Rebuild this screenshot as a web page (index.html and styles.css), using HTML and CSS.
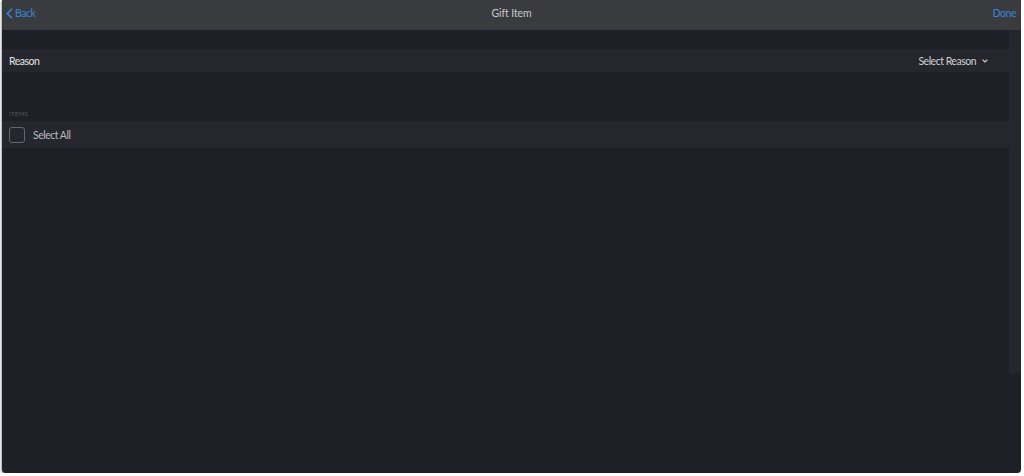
FILE: index.html
```html
<!DOCTYPE html>
<html lang="en">
<head>
  <meta charset="UTF-8">
  <title>Gift Item</title>
  <link rel="stylesheet" href="styles.css">
</head>
<body>
  <div class="screen">
    <header class="nav">
      <a class="nav-back" href="#">
        <svg width="7" height="11" viewBox="0 0 7 11"><path d="M6 0.8 L1.3 5.5 L6 10.2" fill="none" stroke="currentColor" stroke-width="1.6"/></svg>
        <span>Back</span>
      </a>
      <div class="nav-title">Gift Item</div>
      <a class="nav-done" href="#">Done</a>
    </header>

    <div class="content">
      <div class="spacer-top"></div>
      <div class="row">
        <span class="row-label">Reason</span>
        <button class="picker">Select Reason
          <svg width="6" height="4" viewBox="0 0 6 4"><path d="M0.6 0.6 L3 3 L5.4 0.6" fill="none" stroke="currentColor" stroke-width="1.2"/></svg>
        </button>
      </div>
      <div class="section-head">ITEMS</div>
      <div class="row row-check">
        <span class="checkbox"></span>
        <span class="check-label">Select All</span>
      </div>
      <!-- scroll track on the right -->
      <div class="track"></div>
    </div>
  </div>
</body>
</html>
```

FILE: styles.css
```css
body {
  margin: 0;
  background: #ffffff;
  font-family: Lato, "Open Sans", sans-serif;
}
.screen {
  margin-left: 2px;
  width: 1019px;
  height: 473px;
  background: #1e1f27;
  border-radius: 0 0 4px 4px;
  box-shadow: -1px 1px 2px rgba(0,0,0,0.35);
  overflow: hidden;
  display: flex;
  flex-direction: column;
}
.nav {
  height: 26px;
  padding: 0 4px 4px 4px;
  background: #3a3b3f;
  display: flex;
  align-items: center;
  justify-content: space-between;
  position: relative;
  font-size: 10.5px;
  letter-spacing: -0.45px;
}
.nav a {
  color: #3a84d6;
  text-decoration: none;
}
.nav-back {
  display: flex;
  align-items: center;
  gap: 2px;
}
.nav-done {
  padding-right: 1px;
}
.nav-title {
  position: absolute;
  left: 0;
  right: 0;
  text-align: center;
  font-size: 10.5px;
  letter-spacing: -0.1px;
  color: #c9c9cc;
  pointer-events: none;
}
.content {
  flex: 1;
  position: relative;
}
.spacer-top {
  height: 19px;
}
.row {
  background: #26272e;
  display: flex;
  align-items: center;
  justify-content: space-between;
  height: 23px;
  padding: 0 33px 0 7px;
  font-size: 10.5px;
  letter-spacing: -0.5px;
}
.row-label {
  color: #e4e4e6;
}
.picker {
  background: none;
  border: none;
  padding: 0;
  color: #d0d0d3;
  font: inherit;
  letter-spacing: inherit;
  display: flex;
  align-items: center;
  gap: 6px;
}
.section-head {
  padding: 38px 7px 4px;
  font-size: 6.5px;
  color: #55565c;
}
.row-check {
  height: 27px;
  justify-content: flex-start;
  gap: 8px;
}
.checkbox {
  width: 14px;
  height: 14px;
  border: 1px solid #66676d;
  border-radius: 3px;
}
.check-label {
  color: #b9b9bd;
}
.track {
  position: absolute;
  top: 0;
  right: 0;
  width: 12px;
  height: 343px;
  background: #26272e;
}
```
